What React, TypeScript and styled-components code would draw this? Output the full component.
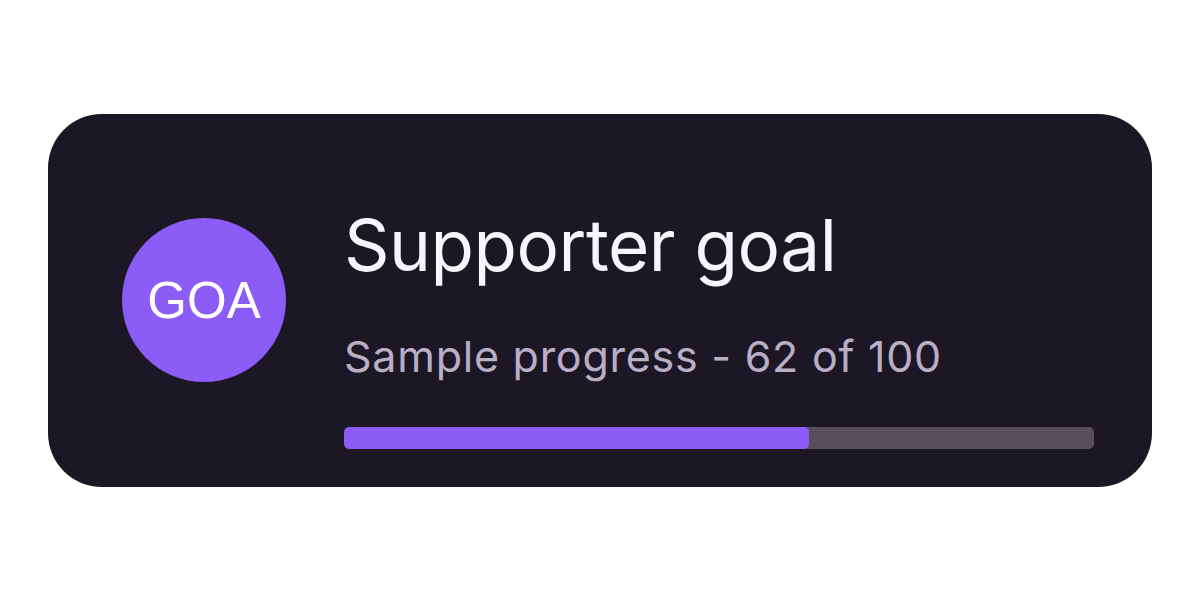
import React from "react";
import styled, { createGlobalStyle } from "styled-components";

const Global = createGlobalStyle`
  html, body { margin: 0; padding: 0; background: #ffffff; }
  body { font-family: Inter, "Liberation Sans", sans-serif; }
`;

const Page = styled.div`
  width: 1200px;
  height: 600px;
  display: flex;
  align-items: center;
  justify-content: center;
`;

const Card = styled.div`
  width: 1104px;
  height: 373px;
  box-sizing: border-box;
  background: #1c1724;
  border-radius: 54px;
  display: flex;
  align-items: center;
  padding: 0 58px 0 74px;
  gap: 58px;
`;

const Avatar = styled.div`
  flex: 0 0 164px;
  width: 164px;
  height: 164px;
  border-radius: 50%;
  background: #8b5cf6;
  display: flex;
  align-items: center;
  justify-content: center;
  color: #ffffff;
  font-family: "Liberation Sans", Arial, sans-serif;
  font-size: 51px;
  line-height: 1;
`;

const Content = styled.div`
  flex: 1;
  align-self: flex-end;
  margin-bottom: 38px;
  display: flex;
  flex-direction: column;
`;

const Title = styled.div`
  font-size: 71px;
  line-height: 1.2;
  color: #f8f4fc;
  font-weight: 400;
  letter-spacing: -0.5px;
`;

const Subtitle = styled.div`
  margin-top: 43px;
  font-size: 43px;
  line-height: 1.2;
  letter-spacing: 0.75px;
  color: #b8afc4;
  font-weight: 400;
`;

const Track = styled.div`
  margin-top: 44px;
  height: 22px;
  border-radius: 5px;
  background: #574f5c;
  overflow: hidden;
`;

const Fill = styled.div`
  height: 100%;
  background: #8b5cf6;
  border-radius: 5px;
`;

export default function App() {
  const current = 62;
  const total = 100;
  return (
    <>
      <Global />
      <Page>
        <Card>
          <Avatar>GOA</Avatar>
          <Content>
            <Title>Supporter goal</Title>
            <Subtitle>Sample progress - {current} of {total}</Subtitle>
            <Track>
              <Fill style={{ width: `${(current / total) * 100}%` }} />
            </Track>
          </Content>
        </Card>
      </Page>
    </>
  );
}
